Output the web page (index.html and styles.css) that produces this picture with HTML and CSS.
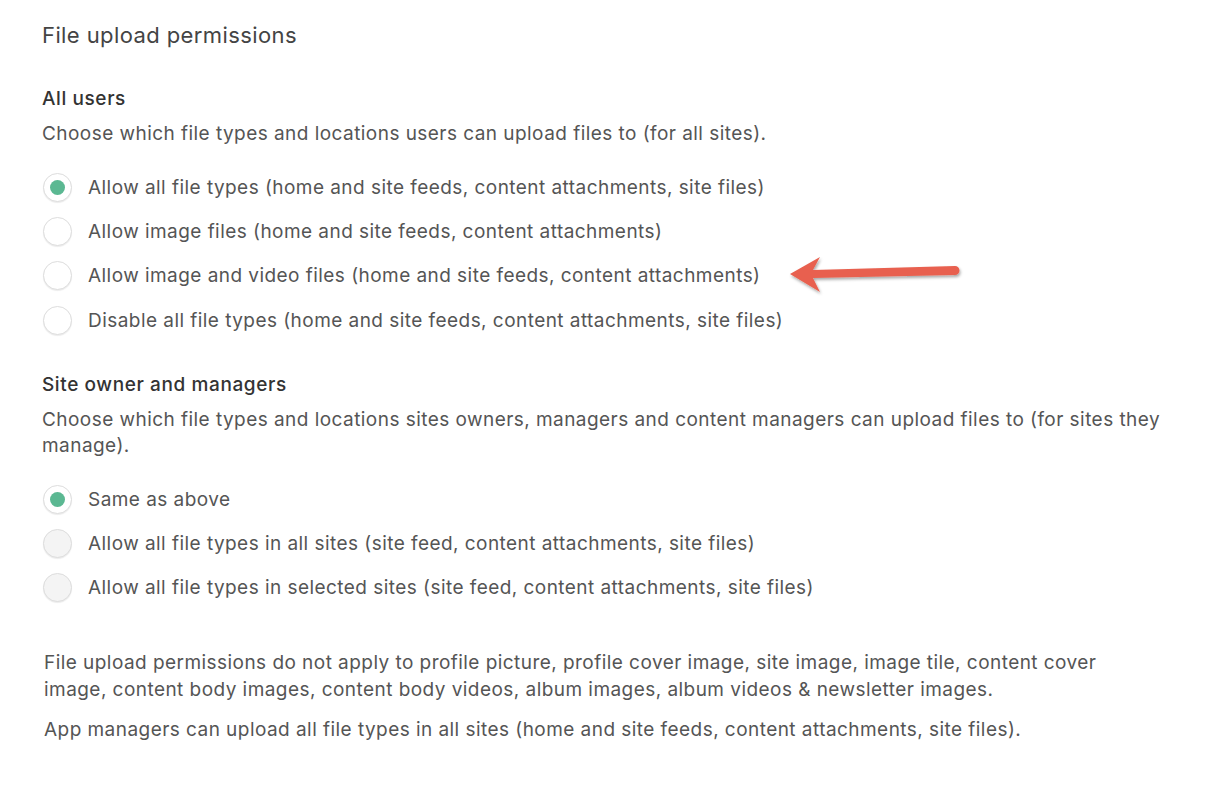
FILE: index.html
```html
<!DOCTYPE html>
<html lang="en">
<head>
    <meta charset="UTF-8">
    <meta name="viewport" content="width=device-width, initial-scale=1.0">
    <title>File upload permissions</title>
    <link rel="stylesheet" href="styles.css">
</head>
<body>
    <div class="page">
        <h1 class="title">File upload permissions</h1>

        <section class="group">
            <h2 class="group-title">All users</h2>
            <p class="desc">Choose which file types and locations users can upload files to (for all sites).</p>
            <ul class="options">
                <li class="option"><span class="radio checked"></span>Allow all file types (home and site feeds, content attachments, site files)</li>
                <li class="option"><span class="radio"></span>Allow image files (home and site feeds, content attachments)</li>
                <li class="option"><span class="radio"></span>Allow image and video files (home and site feeds, content attachments)
                    <svg class="arrow" width="190" height="50" viewBox="0 0 190 50">
                        <defs>
                            <filter id="shadow" x="-10%" y="-30%" width="120%" height="160%">
                                <feDropShadow dx="1" dy="2" stdDeviation="1.5" flood-color="#000" flood-opacity="0.35"/>
                            </filter>
                        </defs>
                        <g filter="url(#shadow)" fill="#e8614f">
                            <path d="M10 25 L40 8 L33 21 L175 17 A4 4 0 0 1 175 26 L33 29 L40 43 Z"/>
                        </g>
                    </svg>
                </li>
                <li class="option"><span class="radio"></span>Disable all file types (home and site feeds, content attachments, site files)</li>
            </ul>
        </section>

        <section class="group">
            <h2 class="group-title">Site owner and managers</h2>
            <p class="desc">Choose which file types and locations sites owners, managers and content managers can upload files to (for sites they manage).</p>
            <ul class="options">
                <li class="option"><span class="radio checked"></span>Same as above</li>
                <li class="option"><span class="radio disabled"></span>Allow all file types in all sites (site feed, content attachments, site files)</li>
                <li class="option"><span class="radio disabled"></span>Allow all file types in selected sites (site feed, content attachments, site files)</li>
            </ul>
        </section>

        <div class="notes">
            <p>File upload permissions do not apply to profile picture, profile cover image, site image, image tile, content cover image, content body images, content body videos, album images, album videos &amp; newsletter images.</p>
            <p>App managers can upload all file types in all sites (home and site feeds, content attachments, site files).</p>
        </div>
    </div>
</body>
</html>
```

FILE: styles.css
```css
body {
    margin: 0;
    font-family: Inter, "Liberation Sans", sans-serif;
    color: #555;
    background-color: #fff;
}
.page {
    padding: 22px 42px;
}
.title {
    margin: 0 0 38px;
    font-size: 22px;
    line-height: 27px;
    font-weight: 400;
    letter-spacing: 0.4px;
    color: #444;
}
.group {
    margin-bottom: 31px;
}
.group-title {
    margin: 0 0 10px;
    font-size: 19px;
    line-height: 24px;
    font-weight: 500;
    letter-spacing: 0.6px;
    color: #333;
}
.desc {
    margin: 0 0 18px;
    font-size: 19px;
    line-height: 26px;
    letter-spacing: 0.45px;
}
.options {
    list-style-type: none;
    margin: 0;
    padding: 0;
}
.option {
    position: relative;
    display: flex;
    align-items: center;
    gap: 16px;
    height: 44.3px;
    font-size: 19px;
    letter-spacing: 0.45px;
}
.radio {
    flex: none;
    position: relative;
    width: 27px;
    height: 27px;
    margin-left: 1px;
    border: 1px solid #ddd;
    border-radius: 50%;
    background-color: #fff;
    box-shadow: 0 1px 1px rgba(0, 0, 0, 0.08);
}
.radio.checked::after {
    content: "";
    position: absolute;
    top: 6px;
    left: 6px;
    width: 15px;
    height: 15px;
    border-radius: 50%;
    background-color: #5bb892;
}
.radio.disabled {
    background-color: #f4f4f4;
}
.arrow {
    position: absolute;
    left: 738px;
    top: -5px;
}
.notes {
    max-width: 1110px;
    margin-top: 39px;
    padding-left: 2px;
    font-size: 19px;
    line-height: 27px;
    letter-spacing: 0.45px;
}
.notes p {
    margin: 0 0 13px;
}
```
